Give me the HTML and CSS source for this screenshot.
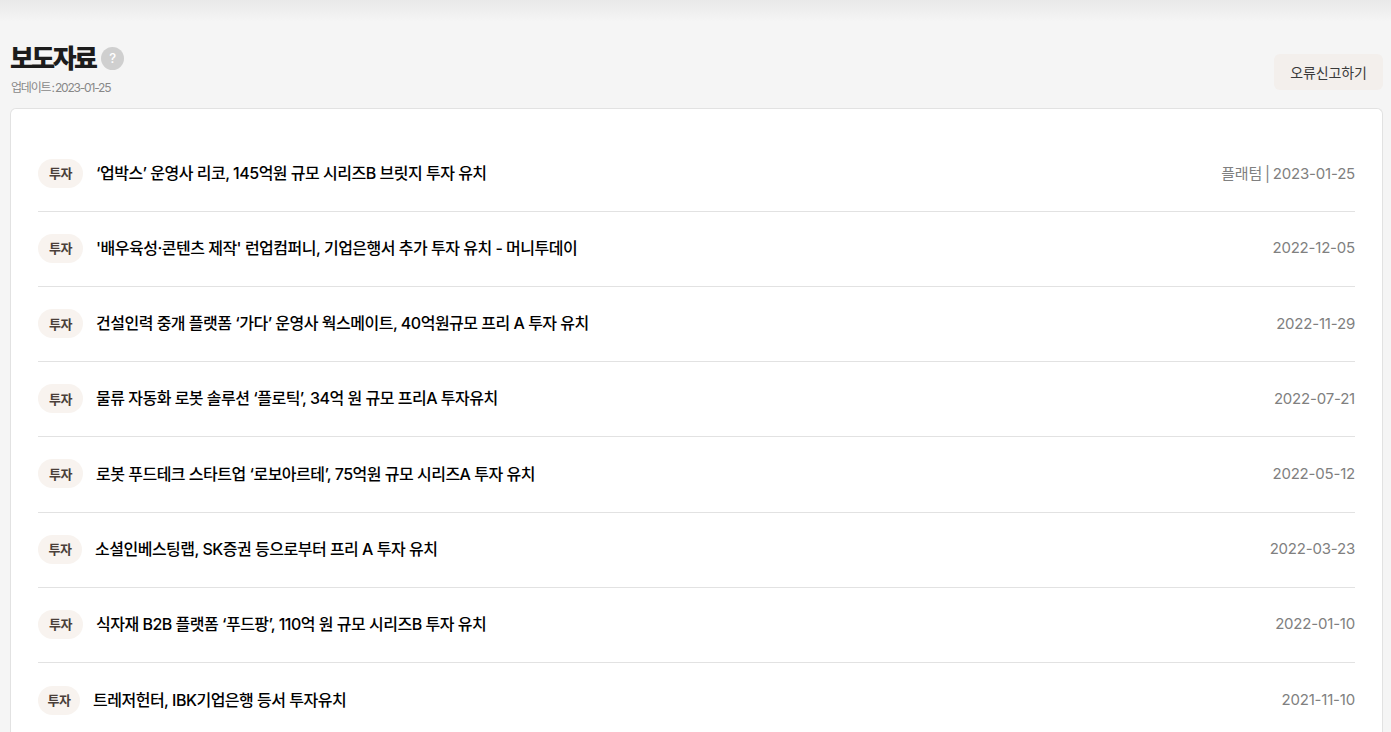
FILE: index.html
```html
<!DOCTYPE html>
<html lang="ko">
<head>
<meta charset="utf-8">
<title>보도자료</title>
<link rel="stylesheet" href="styles.css">
</head>
<body>
<div class="page">
  <header class="head">
    <div class="head-left">
      <div class="title-row">
        <h1 class="title">보도자료</h1>
        <span class="help">?</span>
      </div>
      <p class="updated">업데이트 : 2023-01-25</p>
    </div>
    <button class="report">오류신고하기</button>
  </header>
  <section class="card">
    <ul class="list">
      <li class="row"><span class="badge">투자</span><a class="news">‘업박스’ 운영사 리코, 145억원 규모 시리즈B 브릿지 투자 유치</a><span class="meta">플래텀 | 2023-01-25</span></li>
      <li class="row"><span class="badge">투자</span><a class="news">'배우육성·콘텐츠 제작' 런업컴퍼니, 기업은행서 추가 투자 유치 - 머니투데이</a><span class="meta">2022-12-05</span></li>
      <li class="row"><span class="badge">투자</span><a class="news">건설인력 중개 플랫폼 ‘가다’ 운영사 웍스메이트, 40억원규모 프리 A 투자 유치</a><span class="meta">2022-11-29</span></li>
      <li class="row"><span class="badge">투자</span><a class="news">물류 자동화 로봇 솔루션 ‘플로틱’, 34억 원 규모 프리A 투자유치</a><span class="meta">2022-07-21</span></li>
      <li class="row"><span class="badge">투자</span><a class="news">로봇 푸드테크 스타트업 ‘로보아르테’, 75억원 규모 시리즈A 투자 유치</a><span class="meta">2022-05-12</span></li>
      <li class="row"><span class="badge badge-mid">투자</span><a class="news">소셜인베스팅랩, SK증권 등으로부터 프리 A 투자 유치</a><span class="meta">2022-03-23</span></li>
      <li class="row"><span class="badge">투자</span><a class="news">식자재 B2B 플랫폼 ‘푸드팡’, 110억 원 규모 시리즈B 투자 유치</a><span class="meta">2022-01-10</span></li>
      <li class="row"><span class="badge badge-narrow">투자</span><a class="news">트레저헌터, IBK기업은행 등서 투자유치</a><span class="meta">2021-11-10</span></li>
    </ul>
  </section>
</div>
</body>
</html>
```

FILE: styles.css
```css
* { box-sizing: border-box; }
html, body { margin: 0; padding: 0; height: 100%; overflow: hidden; }
body {
  font-family: Inter, "Noto Sans CJK KR", sans-serif;
  background: #f5f5f5;
  color: #000;
}
.page {
  height: 732px;
  overflow: hidden;
  padding: 44px 8px 0 10px;
  background: linear-gradient(to bottom, #e9e9e9 0, #f5f5f5 22px);
}
.head {
  display: flex;
  justify-content: space-between;
  align-items: flex-start;
  height: 64px;
}
.title-row { display: flex; align-items: center; gap: 6px; height: 28px; }
.title {
  margin: 0;
  padding-top: 2px;
  font-size: 26px;
  line-height: 28px;
  font-weight: 800;
  letter-spacing: -2.6px;
  color: #1c1c1c;
}
.help {
  width: 23px;
  height: 23px;
  border-radius: 50%;
  background: #cfcfcf;
  color: #fff;
  font-size: 13px;
  font-weight: 500;
  display: flex;
  align-items: center;
  justify-content: center;
}
.updated {
  margin: 8px 0 0 1px;
  font-size: 12px;
  line-height: 16px;
  letter-spacing: -1.2px;
  word-spacing: -1px;
  color: #888;
}
.report {
  width: 109px;
  height: 36px;
  margin-top: 10px;
  border: 0;
  border-radius: 6px;
  background: #f3efec;
  color: #3a3a3a;
  font-family: inherit;
  font-size: 14px;
  font-weight: 400;
  letter-spacing: -0.1px;
  padding: 0;
}
.card {
  background: #fff;
  border: 1px solid #e2e2e2;
  border-bottom: 0;
  border-radius: 6px 6px 0 0;
  padding: 27.6px 27px 0;
  height: 640px;
}
.list { list-style: none; margin: 0; padding: 0; }
.row {
  display: flex;
  align-items: center;
  height: 75.2px;
  padding-bottom: 1px;
  border-bottom: 1px solid #e2e2e2;
}
.row:last-child { border-bottom: 0; }
.badge {
  flex: none;
  width: 45px;
  height: 29px;
  padding-bottom: 1px;
  border-radius: 15px;
  background: #f8f3ef;
  color: #4a3f3a;
  font-size: 13px;
  font-weight: 600;
  letter-spacing: -0.4px;
  display: flex;
  align-items: center;
  justify-content: center;
}
.badge-mid { width: 44px; }
.badge-narrow { width: 42px; }
.news {
  margin-left: 13px;
  padding-bottom: 2.6px;
  font-size: 16px;
  font-weight: 500;
  letter-spacing: -0.5px;
  color: #000;
}
.meta {
  margin-left: auto;
  padding-bottom: 1px;
  font-size: 15px;
  letter-spacing: -0.2px;
  word-spacing: -1px;
  color: #808080;
}
```
